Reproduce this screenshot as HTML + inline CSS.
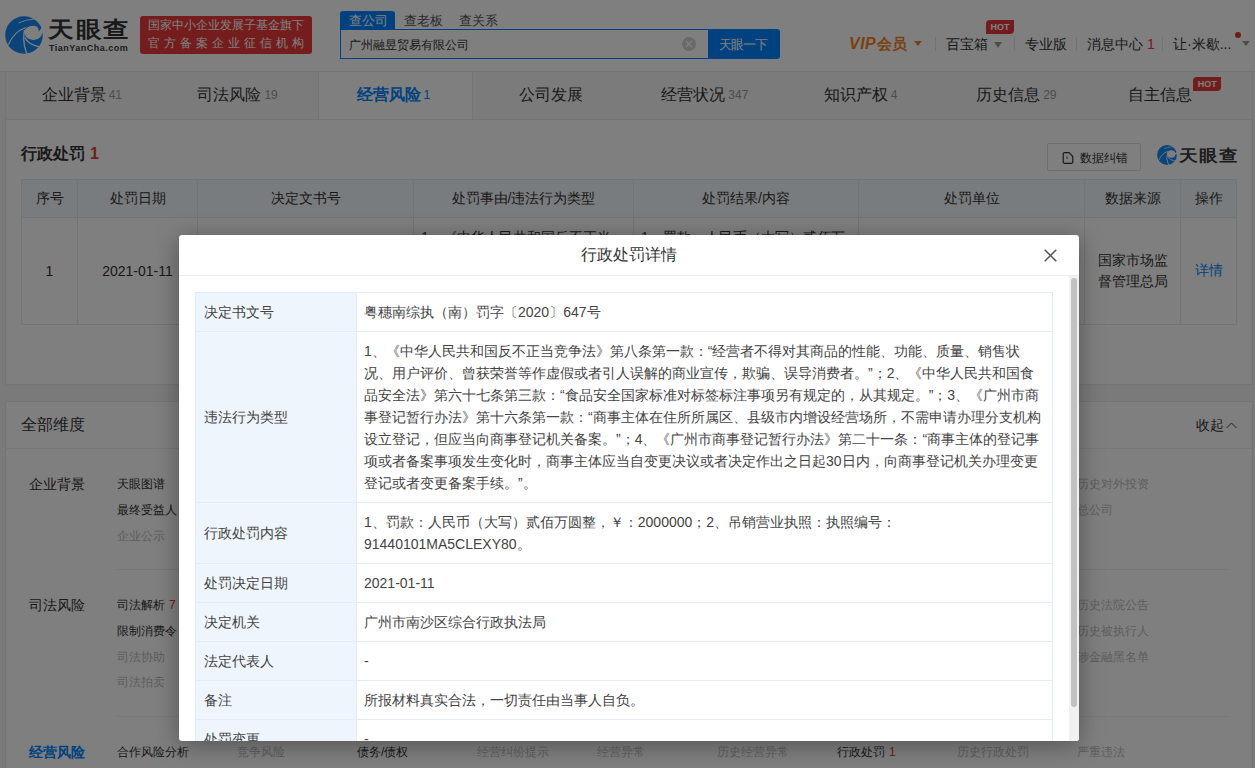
<!DOCTYPE html>
<html><head><meta charset="utf-8">
<style>
*{box-sizing:border-box;margin:0;padding:0}
body{width:1255px;height:768px;overflow:hidden;position:relative;background:#f5f5f5;font-family:"Liberation Sans",sans-serif;color:#333}
.a{position:absolute;white-space:nowrap}
.hdr{position:absolute;left:0;top:0;width:1255px;height:72px;background:#fff;border-bottom:1px solid #e4e4e4}
.nav{font-size:14px;line-height:14px;color:#333}
.sep{position:absolute;width:1px;height:14px;background:#e6e6e6;top:37px}
.tri{position:absolute;width:0;height:0;border-left:4px solid transparent;border-right:4px solid transparent;border-top:6px solid #999}
.tabs{position:absolute;left:5px;top:72px;width:1248px;height:48px;background:#f7f7f7;border:1px solid #ebebeb;border-top:none;display:flex}
.tab{width:155.75px;height:47px;text-align:center;font-size:16px;line-height:45px;color:#333;position:relative}
.tab small{font-size:12px;color:#999;margin-left:3px;margin-right:4px;position:relative;top:-1px}
.tab.on{background:#fff;border-left:1px solid #e8e8e8;border-right:1px solid #e8e8e8;color:#0084ff;font-weight:bold}
.tab.on small{color:#0084ff;font-weight:normal}
.card{position:absolute;left:5px;width:1248px;background:#fff;border:1px solid #ebebeb}
table{border-collapse:collapse;table-layout:fixed}
.t1{position:absolute;left:21px;top:179px;width:1215px}
.t1 th{height:38px;background:#f2f8fd;border:1px solid #e1ebf4;font-weight:normal;font-size:14px;color:#333}
.t1 td{height:107px;border:1px solid #e1ebf4;font-size:14px;color:#333;text-align:center;vertical-align:middle}
.it{position:absolute;font-size:12px;line-height:12px;color:#333;white-space:nowrap}
.it.g{color:#bbb}
.lbl{position:absolute;left:24px;font-size:14px;line-height:14px;color:#333}
.overlay{position:absolute;left:0;top:0;width:1255px;height:768px;background:rgba(0,0,0,.5)}
.modal{position:absolute;left:179px;top:235px;width:900px;height:506px;background:#fff;border-radius:3px;box-shadow:0 4px 24px rgba(0,0,0,.35);overflow:hidden}
.mh{height:41px;border-bottom:1px solid #ededed;text-align:center;font-size:16px;line-height:40px;color:#333;position:relative}
.mb{position:absolute;left:0;top:41px;width:890px;height:465px;overflow:hidden}
.t2{position:absolute;left:16px;top:16px;width:857px}
.t2 td{border:1px solid #e3edf8;padding:8px 7px;font-size:14px;line-height:22px;color:#444;vertical-align:middle;white-space:nowrap}
.t2 td.k{background:#eef5fc;width:161px;padding-left:8px}
.sb{position:absolute;left:890px;top:41px;width:10px;height:465px;background:#f1f1f1}
.th{position:absolute;left:2px;top:2px;width:6px;height:429px;background:#c1c1c1;border-radius:3px}
</style></head><body>

<!-- HEADER -->
<div class="hdr">
  <svg class="a" style="left:5px;top:16px" width="38" height="38" viewBox="0 0 38 38">
    <circle cx="19" cy="19" r="18.8" fill="#1588f5"/>
    <path d="M19.3 17C19.3 12.5 23.5 9.7 28.6 9.7C31.5 9.7 33.9 11.6 33.8 15.4C35 14 36 12.8 36.6 12L39 12L39 17.1L37.4 17.1C36.5 21 33.5 23.7 29 23.9C25 24 20.5 22.5 19.3 17Z" fill="#fff"/>
    <path d="M3.3 28.8Q9 15.5 21 11.5" stroke="#fff" stroke-width="1.2" fill="none"/>
    <path d="M19.6 14Q17 26 21.8 38" stroke="#fff" stroke-width="1.3" fill="none"/>
    <path d="M19.8 21.5Q23 28.5 35 31" stroke="#fff" stroke-width="1.3" fill="none"/>
    <path d="M13.5 7Q20 3.6 29.5 3" stroke="#fff" stroke-width="0.9" fill="none"/>
  </svg>
  <div class="a" style="left:48px;top:19px;font-size:25px;line-height:25px;font-weight:bold;color:#333;letter-spacing:2.5px;transform:scaleY(.86);transform-origin:0 0">天眼查</div>
  <div class="a" style="left:49px;top:44px;font-size:9px;line-height:9px;font-weight:bold;color:#3a3a3a;letter-spacing:0.5px">TianYanCha.com</div>

  <div class="a" style="left:140px;top:16px;width:172px;height:38px;background:#ea3a3a;border-radius:3px"></div>
  <div class="a" style="left:148px;top:19px;font-size:12px;line-height:12px;color:#fff;font-weight:500">国家中小企业发展子基金旗下</div>
  <div class="a" style="left:148px;top:37px;font-size:12px;line-height:12px;color:#fff;letter-spacing:3.95px;font-weight:500">官方备案企业征信机构</div>

  <div class="a" style="left:340px;top:11px;width:55px;height:19px;background:#0084ff;border-radius:3px 3px 0 0"></div>
  <div class="a" style="left:349px;top:14px;font-size:13px;line-height:13px;color:#fff">查公司</div>
  <div class="a" style="left:404px;top:14px;font-size:13px;line-height:13px;color:#555">查老板</div>
  <div class="a" style="left:459px;top:14px;font-size:13px;line-height:13px;color:#555">查关系</div>
  <div class="a" style="left:340px;top:29px;width:369px;height:30px;border:1px solid #0084ff;border-right:none;background:#fff"></div>
  <div class="a" style="left:349px;top:39px;font-size:12px;line-height:12px;color:#333">广州融昱贸易有限公司</div>
  <div class="a" style="left:682px;top:37px;width:14px;height:14px;border-radius:50%;background:#d4d4d4"></div>
  <svg class="a" style="left:685px;top:40px" width="8" height="8"><path d="M1 1L7 7M7 1L1 7" stroke="#fff" stroke-width="1.4"/></svg>
  <div class="a" style="left:708px;top:29px;width:72px;height:30px;background:#0084ff;border-radius:0 3px 3px 0"></div>
  <div class="a" style="left:719px;top:38px;font-size:13px;line-height:13px;color:#fff;letter-spacing:-1px">天眼一下</div>

  <div class="a" style="left:849px;top:36px;font-size:16px;line-height:16px;color:#f5821f;font-weight:bold;font-style:italic;letter-spacing:0.5px">VIP<span style="font-style:normal;font-size:15px;margin-left:1px;letter-spacing:0">会员</span></div>
  <div class="tri" style="left:914px;top:41px;border-top-width:5px;border-top-color:#f5821f"></div>
  <div class="sep" style="left:935px"></div>
  <div class="a nav" style="left:946px;top:37px">百宝箱</div>
  <div class="tri" style="left:994px;top:42px"></div>
  <div class="a" style="left:986px;top:20px;width:28px;height:14px;background:#e5393a;border-radius:4px 0 4px 0;color:#fff;font-size:9px;line-height:14px;font-weight:bold;text-align:center">HOT</div>
  <div class="sep" style="left:1014px"></div>
  <div class="a nav" style="left:1025px;top:37px">专业版</div>
  <div class="sep" style="left:1076px"></div>
  <div class="a nav" style="left:1087px;top:37px">消息中心<span style="color:#e53935;margin-left:4px">1</span></div>
  <div class="sep" style="left:1162px"></div>
  <div class="a nav" style="left:1173px;top:37px">让·米歇...</div>
  <div class="a" style="left:1235px;top:32px;width:6px;height:6px;border-radius:50%;background:#e53935"></div>
  <div class="tri" style="left:1242px;top:41px;border-left-width:4px;border-right-width:4px;border-top-width:5px"></div>
</div>

<!-- TABS -->
<div class="tabs">
  <div class="tab">企业背景<small>41</small></div>
  <div class="tab">司法风险<small>19</small></div>
  <div class="tab on">经营风险<small>1</small></div>
  <div class="tab">公司发展</div>
  <div class="tab">经营状况<small>347</small></div>
  <div class="tab">知识产权<small>4</small></div>
  <div class="tab">历史信息<small>29</small></div>
  <div class="tab" style="padding-right:29px">自主信息<span class="a" style="left:97px;top:5px;width:28px;height:14px;background:#e5393a;border-radius:4px 0 4px 0;color:#fff;font-size:9px;line-height:14px;font-weight:bold;text-align:center">HOT</span></div>
</div>

<!-- CARD 1 -->
<div class="card" style="top:120px;height:265px;border-top:none"></div>
<div class="a" style="left:21px;top:146px;font-size:16px;line-height:16px;font-weight:bold;color:#333">行政处罚<span style="color:#e53935;margin-left:5px">1</span></div>
<div class="a" style="left:1047px;top:143px;width:94px;height:28px;border:1px solid #dcdcdc;border-radius:2px"></div>
<svg class="a" style="left:1062px;top:152px" width="12" height="12" viewBox="0 0 12 12"><path d="M2.5 0.7H7L10.8 4.5V10A1.3 1.3 0 0 1 9.5 11.3H2.5A1.3 1.3 0 0 1 1.2 10V2A1.3 1.3 0 0 1 2.5 0.7Z" fill="none" stroke="#333" stroke-width="1.2"/><path d="M5 4.5V7" stroke="#555" stroke-width="1"/></svg>
<div class="a" style="left:1080px;top:152px;font-size:12px;line-height:12px;color:#333">数据纠错</div>
<svg class="a" style="left:1157px;top:145px" width="20" height="20" viewBox="0 0 38 38">
    <circle cx="19" cy="19" r="18.8" fill="#1588f5"/>
    <ellipse cx="27.2" cy="17" rx="7.8" ry="7" fill="#fff"/>
    <path d="M28 16.5L39 13.8L39 18.2Z" fill="#fff"/>
    <path d="M3.5 28.6Q9 16 21 11.7" stroke="#fff" stroke-width="1.6" fill="none"/>
    <path d="M20 14Q16 26 22 38" stroke="#fff" stroke-width="1.6" fill="none"/>
    <path d="M20 22Q24 29 34 30.5" stroke="#fff" stroke-width="1.6" fill="none"/>
    <path d="M13.5 7Q20 4 29 3.5" stroke="#fff" stroke-width="1.2" fill="none"/>
  </svg>
<div class="a" style="left:1179px;top:147px;font-size:19px;line-height:19px;font-weight:bold;color:#383838;letter-spacing:0.8px;transform:scaleY(.86);transform-origin:0 0">天眼查</div>

<table class="t1">
<colgroup><col style="width:56px"><col style="width:120px"><col style="width:216px"><col style="width:220px"><col style="width:225px"><col style="width:226px"><col style="width:96px"><col style="width:56px"></colgroup>
<tr><th>序号</th><th>处罚日期</th><th>决定文书号</th><th>处罚事由/违法行为类型</th><th>处罚结果/内容</th><th>处罚单位</th><th>数据来源</th><th>操作</th></tr>
<tr><td>1</td><td>2021-01-11</td><td></td><td style="text-align:left;vertical-align:top;padding:8px 0 0 7px;line-height:22px;overflow:hidden;white-space:nowrap">1、《中华人民共和国反不正当</td><td style="text-align:left;vertical-align:top;padding:8px 0 0 7px;line-height:22px;overflow:hidden;white-space:nowrap">1、罚款：人民币（大写）贰佰万</td><td></td><td style="line-height:21px">国家市场监<br>督管理总局</td><td style="color:#0084ff">详情</td></tr>
</table>

<!-- CARD 2 -->
<div class="card" style="top:401px;height:400px"></div>
<div class="a" style="left:21px;top:417px;font-size:16px;line-height:16px;color:#333">全部维度</div>
<div class="a" style="left:1196px;top:418px;font-size:14px;line-height:14px;color:#333">收起</div>
<svg class="a" style="left:1226px;top:421px" width="11" height="8"><path d="M0.5 7L5.5 2L10.5 7" fill="none" stroke="#444" stroke-width="1"/></svg>
<div class="a" style="left:5px;top:448px;width:1248px;height:1px;background:#eee"></div>

<div class="lbl" style="left:29px;top:477px">企业背景</div>
<div class="it" style="left:117px;top:478px">天眼图谱</div>
<div class="it" style="left:117px;top:504px">最终受益人</div>
<div class="it g" style="left:117px;top:530px">企业公示</div>
<div class="it g" style="left:1077px;top:478px">历史对外投资</div>
<div class="it g" style="left:1077px;top:504px">总公司</div>
<div class="a" style="left:117px;top:569px;width:1112px;height:1px;background:#eee"></div>

<div class="lbl" style="left:29px;top:598px">司法风险</div>
<div class="it" style="left:117px;top:599px">司法解析<span style="color:#e53935;margin-left:4px">7</span></div>
<div class="it" style="left:117px;top:625px">限制消费令</div>
<div class="it g" style="left:117px;top:651px">司法协助</div>
<div class="it g" style="left:117px;top:676px">司法拍卖</div>
<div class="it g" style="left:1077px;top:599px">历史法院公告</div>
<div class="it g" style="left:1077px;top:625px">历史被执行人</div>
<div class="it g" style="left:1077px;top:651px">涉金融黑名单</div>
<div class="a" style="left:117px;top:716px;width:1112px;height:1px;background:#eee"></div>

<div class="lbl" style="left:29px;top:745px;color:#0084ff;font-weight:bold">经营风险</div>
<div class="it" style="left:117px;top:746px">合作风险分析</div>
<div class="it g" style="left:237px;top:746px">竞争风险</div>
<div class="it" style="left:357px;top:746px">债务/债权</div>
<div class="it g" style="left:477px;top:746px">经营纠纷提示</div>
<div class="it g" style="left:597px;top:746px">经营异常</div>
<div class="it g" style="left:717px;top:746px">历史经营异常</div>
<div class="it" style="left:837px;top:746px">行政处罚<span style="color:#e53935;margin-left:4px;font-weight:normal">1</span></div>
<div class="it g" style="left:957px;top:746px">历史行政处罚</div>
<div class="it g" style="left:1077px;top:746px">严重违法</div>

<div class="overlay"></div>

<!-- MODAL -->
<div class="modal">
  <div class="mh">行政处罚详情
    <svg class="a" style="left:865px;top:14px" width="13" height="13"><path d="M0.7 0.7L12.3 12.3M12.3 0.7L0.7 12.3" stroke="#555" stroke-width="1.5"/></svg>
  </div>
  <div class="mb">
    <table class="t2">
      <colgroup><col style="width:161px"><col style="width:696px"></colgroup>
      <tr><td class="k">决定书文号</td><td>粤穗南综执（南）罚字〔2020〕647号</td></tr>
      <tr><td class="k">违法行为类型</td><td>1、《中华人民共和国反不正当竞争法》第八条第一款：“经营者不得对其商品的性能、功能、质量、销售状<br>况、用户评价、曾获荣誉等作虚假或者引人误解的商业宣传，欺骗、误导消费者。”；2、《中华人民共和国食<br>品安全法》第六十七条第三款：“食品安全国家标准对标签标注事项另有规定的，从其规定。”；3、《广州市商<br>事登记暂行办法》第十六条第一款：“商事主体在住所所属区、县级市内增设经营场所，不需申请办理分支机构<br>设立登记，但应当向商事登记机关备案。”；4、《广州市商事登记暂行办法》第二十一条：“商事主体的登记事<br>项或者备案事项发生变化时，商事主体应当自变更决议或者决定作出之日起30日内，向商事登记机关办理变更<br>登记或者变更备案手续。”。</td></tr>
      <tr><td class="k">行政处罚内容</td><td>1、罚款：人民币（大写）贰佰万圆整，￥：2000000；2、吊销营业执照：执照编号：<br>91440101MA5CLEXY80。</td></tr>
      <tr><td class="k">处罚决定日期</td><td>2021-01-11</td></tr>
      <tr><td class="k">决定机关</td><td>广州市南沙区综合行政执法局</td></tr>
      <tr><td class="k">法定代表人</td><td>-</td></tr>
      <tr><td class="k">备注</td><td>所报材料真实合法，一切责任由当事人自负。</td></tr>
      <tr><td class="k">处罚变更</td><td>-</td></tr>
    </table>
  </div>
  <div class="sb"><div class="th"></div></div>
</div>
</body></html>
